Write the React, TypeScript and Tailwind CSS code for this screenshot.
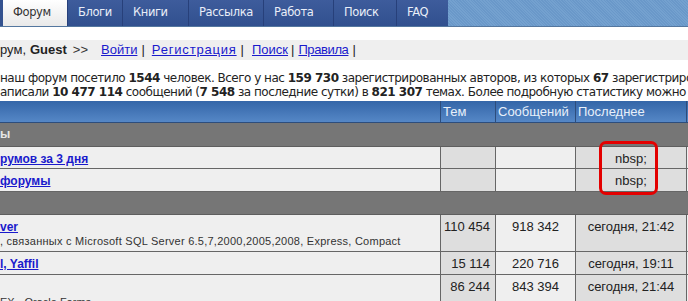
import { FC } from "react";

const tabs = [
  { label: "Форум", w: "w-[64px]", active: true },
  { label: "Блоги", w: "w-[55px]" },
  { label: "Книги", w: "w-[66px]" },
  { label: "Рассылка", w: "w-[75px]" },
  { label: "Работа", w: "w-[70px]" },
  { label: "Поиск", w: "w-[63px]" },
  { label: "FAQ", w: "w-[52px]" },
];

const cols = "grid grid-cols-[440px_55px_80px_111px_2px] grid-rows-[100%]";

const Row: FC<{
  h: string;
  title: string;
  desc?: string;
  topics?: string;
  posts?: string;
  last?: string;
}> = ({ h, title, desc, topics, posts, last }) => (
  <div className={`${cols} ${h} overflow-hidden border-b border-[#666] text-[13px] leading-[15px] text-[#222]`}>
    <div className="bg-[#efefef] pt-[4px] overflow-hidden whitespace-nowrap">
      <a href="#" className="font-bold text-[12px] text-[#1a1acc] underline">
        {title}
      </a>
      {desc && (
        <div className="text-[11px] tracking-[0.25px] text-[#333] leading-[13px]">{desc}</div>
      )}
    </div>
    <div className="bg-[#dedede] border-l border-[#666] text-right pr-[5px] pt-[4px]">{topics}</div>
    <div className="bg-[#efefef] border-l border-[#666] text-center pt-[4px]">{posts}</div>
    <div className="bg-[#dedede] border-l border-[#666] text-center pt-[4px]">{last}</div>
    <div className="bg-[#efefef] border-l border-[#666]" />
  </div>
);

const GrayRow: FC<{ h: string; text?: string }> = ({ h, text }) => (
  <div className={`${h} bg-[#767676] border-b border-[#5e5e5e] text-[12px] font-bold text-[#e6e6e6] pt-[4px] leading-[14px]`}>
    {text}
  </div>
);

export default function App() {
  return (
    <div className="relative w-[688px] h-[301px] overflow-hidden bg-white font-['Liberation_Sans',Arial,sans-serif]">
      {/* top navigation */}
      <nav className="flex h-[27px] bg-[#6b99c9] border-b border-[#54779f]">
        <div className="w-[3px] bg-[#34528f]" />
        {tabs.map((t) => (
          <div
            key={t.label}
            className={`${t.w} flex items-center pl-[10px] text-[11.5px] font-['DejaVu_Sans',sans-serif] tracking-[-0.4px] ${
              t.active
                ? "bg-gradient-to-b from-[#ffffff] to-[#e9e9e9] text-[#333]"
                : "bg-gradient-to-b from-[#3e5c9c] to-[#31508f] text-[#e9eef8] border-l border-[#27407a]"
            }`}
          >
            {t.label}
          </div>
        ))}
        <div className="flex-1 bg-[repeating-linear-gradient(45deg,#6a98c9_0px,#6a98c9_1px,#74a1cf_1px,#74a1cf_2px)]" />
      </nav>

      {/* breadcrumb */}
      <div className="mt-[13px] h-[20px] bg-[#efefef] flex items-center text-[13px] text-[#222] whitespace-nowrap">
        рум, <b className="ml-[4px]">Guest</b>
        <span className="ml-[6px] mr-[13px] text-[#333]">&gt;&gt;</span>
        <a href="#" className="text-[#1a1acc] underline">Войти</a>
        <span className="mx-[4px]">|</span>
        <a href="#" className="ml-[3px] text-[#1a1acc] underline tracking-[0.8px]">Регистрация</a>
        <span className="mx-[4px]">|</span>
        <a href="#" className="ml-[4px] text-[#1a1acc] underline">Поиск</a>
        <span className="ml-[3px] mr-[2px]">|</span>
        <a href="#" className="ml-[2px] text-[#1a1acc] underline tracking-[-0.4px]">Правила</a>
        <span className="ml-[4px]">|</span>
      </div>

      {/* stats */}
      <div className="pt-[11px] h-[41px] text-[12px] leading-[14px] text-[#222] whitespace-nowrap font-['DejaVu_Sans',Verdana,sans-serif] tracking-[-0.5px]">
        <div>
          наш форум посетило <b>1544</b> человек. Всего у нас <b>159 730</b> зарегистрированных авторов, из которых{" "}
          <b>67</b> зарегистрированы
        </div>
        <div>
          аписали <b>10 477 114</b> сообщений (<b>7 548</b> за последние сутки) в <b>821 307</b> темах. Более подробную
          статистику можно
        </div>
      </div>

      {/* table header */}
      <div className={`${cols} h-[22px] overflow-hidden bg-gradient-to-b from-[#3466a8] to-[#5587c6] border-b border-[#2d4d7c] text-[13px] leading-[15px] text-[#e8f0fa]`}>
        <div />
        <div className="border-l border-[#2d4d7c] pl-[2px] pt-[3px]">Тем</div>
        <div className="border-l border-[#2d4d7c] pl-[2px] pt-[3px]">Сообщений</div>
        <div className="border-l border-[#2d4d7c] pl-[2px] pt-[3px]">Последнее</div>
        <div className="border-l border-[#2d4d7c]" />
      </div>

      <GrayRow h="h-[24px]" text="ы" />
      <Row h="h-[22px]" title="румов за 3 дня" last="nbsp;" />
      <Row h="h-[23px]" title="форумы" last="nbsp;" />
      <GrayRow h="h-[23px]" />
      <Row
        h="h-[37px]"
        title="ver"
        desc=", связанных с Microsoft SQL Server 6.5,7,2000,2005,2008, Express, Compact"
        topics="110 454"
        posts="918 342"
        last="сегодня, 21:42"
      />
      <Row h="h-[23px]" title="l, Yaffil" topics="15 114" posts="220 716" last="сегодня, 19:11" />
      <div className={`${cols} h-[30px] text-[13px] leading-[15px] text-[#222]`}>
        <div className="bg-[#efefef] pt-[20px] text-[11px] text-[#333] whitespace-nowrap">EX - Oracle Forms</div>
        <div className="bg-[#dedede] border-l border-[#666] text-right pr-[5px] pt-[4px]">86 244</div>
        <div className="bg-[#efefef] border-l border-[#666] text-center pt-[4px]">843 394</div>
        <div className="bg-[#dedede] border-l border-[#666] text-center pt-[4px]">сегодня, 21:44</div>
        <div className="bg-[#efefef] border-l border-[#666]" />
      </div>

      {/* red highlight */}
      <div className="absolute left-[599px] top-[141px] w-[59px] h-[54px] border-[3px] border-[#e30000] rounded-[7px]" />
    </div>
  );
}
